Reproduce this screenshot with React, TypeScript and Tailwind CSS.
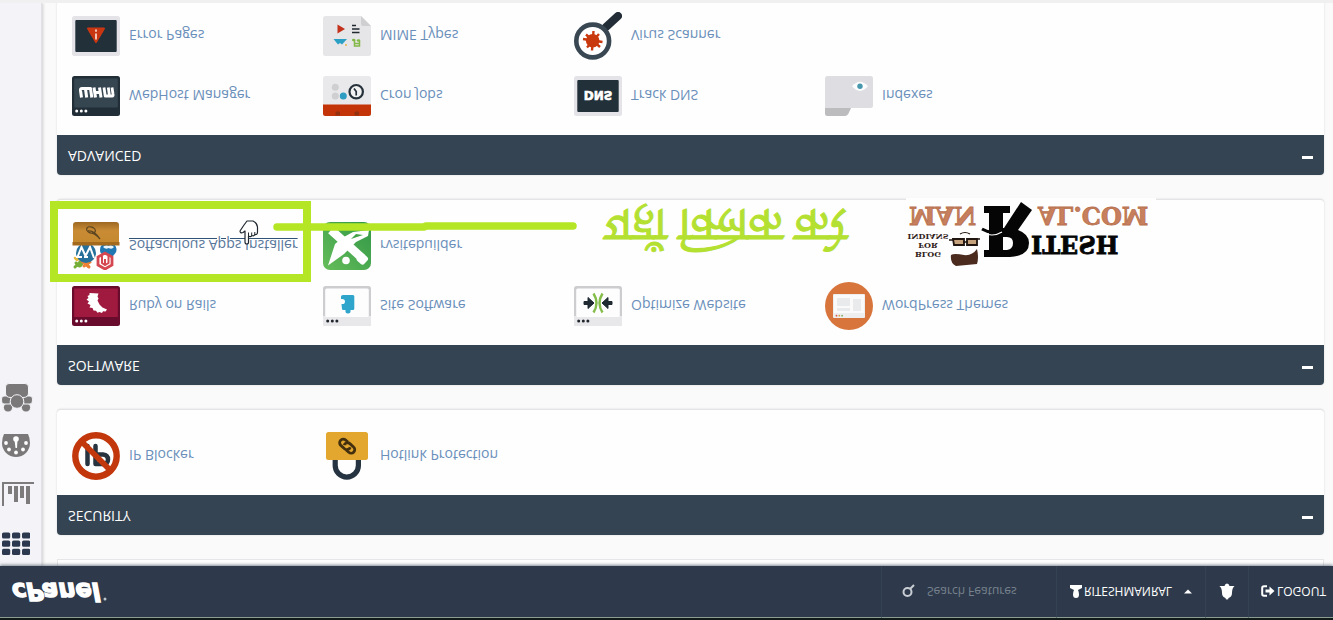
import React from "react";

type Item = { name: string; icon: React.ReactNode; active?: boolean };

function Icon({ children }: { children: React.ReactNode }) {
  return (
    <svg viewBox="0 0 48 48" className="size-12 shrink-0" aria-hidden="true">
      {children}
    </svg>
  );
}

const Dots = ({ fill }: { fill: string }) => (
  <g fill={fill}>
    <circle cx="4.7" cy="9" r="1.5" />
    <circle cx="9.3" cy="9" r="1.5" />
    <circle cx="13.9" cy="9" r="1.5" />
  </g>
);

const LightWindow = ({ children }: { children: React.ReactNode }) => (
  <Icon>
    <rect y="4" width="48" height="40" rx="2.5" fill="#cdcdd0" />
    <path d="M0 14V6.500Q0 4 2.500 4H45.500Q48 4 48 6.500V14Z" fill="#e8e8eb" />
    <rect x="2.200" y="13" width="43.600" height="28.500" rx="1.500" fill="#fdfdfe" />
    <Dots fill="#20262c" />
    {children}
  </Icon>
);

const DarkFrame = ({ children }: { children: React.ReactNode }) => (
  <Icon>
    <rect y="4" width="48" height="40" rx="2.5" fill="#e3e3e8" />
    <rect x="3.300" y="8" width="41.400" height="32" rx="1" fill="#22303a" />
    {children}
  </Icon>
);

const IpBlocker = (
  <Icon>
    <g fill="none" stroke="#27333f" strokeWidth="4.500" strokeLinecap="round" strokeLinejoin="round">
      <path d="M15.500 16V34" />
      <path d="M23.500 34V16H31Q36 16 36 20.500T31 25.500H24" />
    </g>
    <circle cx="24" cy="24" r="20.700" fill="none" stroke="#c2370b" strokeWidth="6.400" />
    <path d="M9.500 38.500L38.500 9.500" stroke="#c2370b" strokeWidth="5.600" />
  </Icon>
);

const Hotlink = (
  <Icon>
    <path d="M12.200 22V14.500a11.600 11.600 0 0 1 23.200 0V22" fill="none" stroke="#253440" strokeWidth="5.200" />
    <rect x="3" y="20" width="42" height="28" rx="2.500" fill="#e3a72f" />
    <g fill="none" stroke="#43300f" strokeWidth="2.800" transform="rotate(-42 24 34)">
      <path d="M22 37.500H19a3.600 3.600 0 0 1 0-7.200h5a3.600 3.600 0 0 1 3.200 5" />
      <path d="M26 30.500H29.500a3.600 3.600 0 0 1 0 7.200h-5a3.600 3.600 0 0 1-3.200-5" />
    </g>
  </Icon>
);

const Ruby = (
  <Icon>
    <rect y="4" width="48" height="40" rx="2.500" fill="#690b2d" />
    <rect x="2.200" y="13" width="43.600" height="28.500" fill="#a01a40" />
    <Dots fill="#ffffff" />
    <path d="M35 20.500L33.500 18.500 31 18.800 30 17 27.500 18 25.500 17.200 24 19.200 21.500 19.500 20.500 22 17.500 22.500 18.500 25 15.500 26.500 17 28.500 14.500 30.500 16.500 32 15.500 34 17.500 35 17.500 37 26.500 36.500 25.500 33.500 26.500 31.500 25.500 29.500 27.500 25.500 30.500 22.500Z" fill="#ffffff" />
  </Icon>
);

const SiteSoftware = (
  <LightWindow>
    <path d="M19 21Q19 20 20.500 20H22.500Q22 16.500 25 16.500T27.500 20H30Q31.300 20 31.300 21.500V33.500Q31.300 35 30 35H20Q18 35 18 33.500V31Q22 31.500 22 28.500T18.500 26Z" fill="#2fa5cc" />
  </LightWindow>
);

const Optimize = (
  <LightWindow>
    <g fill="#1f2a33">
      <path d="M10 25.500H14V21.500L20 27 14 32.500V28.500H10Z" stroke="#1f2a33" strokeLinejoin="round" />
      <path d="M38 25.500H34V21.500L28 27 34 32.500V28.500H38Z" stroke="#1f2a33" strokeLinejoin="round" />
    </g>
    <g fill="none" stroke="#84bd4a" strokeWidth="2.400">
      <path d="M19.500 17.500Q25.500 27 19.500 36.500" />
      <path d="M28.500 17.500Q22.500 27 28.500 36.500" />
    </g>
  </LightWindow>
);

const WordPressThemes = (
  <Icon>
    <circle cx="24" cy="24" r="24" fill="#d8753c" />
    <rect x="8" y="12" width="32" height="24" rx="1" fill="#eeeeef" />
    <rect x="9" y="17" width="30" height="18" fill="#fafafb" />
    <path d="M12 19h13v3H12zM12 24h13v8H12zM28 19h8v12h-8z" fill="#e9eaec" />
    <circle cx="11.500" cy="14.300" r=".9" fill="#d45145" />
    <circle cx="14.300" cy="14.300" r=".9" fill="#d8a244" />
    <circle cx="17.100" cy="14.300" r=".9" fill="#7eae62" />
  </Icon>
);

const Softaculous = (
  <Icon>
    <defs>
      <linearGradient id="box" x1="0" y1="0" x2="0" y2="1">
        <stop offset="0" stopColor="#c4882e" />
        <stop offset=".6" stopColor="#c98c35" />
        <stop offset="1" stopColor="#9d6822" />
      </linearGradient>
    </defs>
    <g fill="none" strokeLinecap="round">
      <path d="M4 7Q8 1 10 7T16 4M3 3L10 10" stroke="#75ad39" strokeWidth="3" />
      <path d="M10 9L17 3M12 4L18 8" stroke="#ed8136" strokeWidth="3" />
      <path d="M3 12L5 10L9 12" stroke="#e7b93c" strokeWidth="2.500" />
    </g>
    <circle cx="14" cy="17" r="10" fill="#26719c" />
    <path d="M5.500 13L9.500 23L13.500 14L18 23L22 12M4 13H10M12 13H16" fill="none" stroke="#ffffff" strokeWidth="2" />
    <path d="M37 9C37 14 45 14 44.500 21Q44 27 36 27T28 20C28 14 34 16 37 9Z" fill="#2078b2" />
    <path d="M31 23Q34 20 36.500 22Q40 20 42 23Q39 26 36.500 24Q34 26 31 23Z" fill="#eaf5fb" />
    <path d="M26 5L33 1 40 5V13L33 17 26 13Z" fill="#ffffff" stroke="#d54851" strokeWidth="2.800" />
    <path d="M30 14V7L33 5 36.500 7V14M33 5V11" fill="none" stroke="#d54851" strokeWidth="2" />
    <path d="M1 26H47V45Q47 48 44 48H4Q1 48 1 45Z" fill="url(#box)" />
    <path d="M.5 24.500H47.500V28H.5Z" fill="#a3691d" />
    <g fill="none" stroke="#5d4620" strokeWidth="1.300">
      <ellipse cx="19" cy="40" rx="4.500" ry="3" transform="rotate(-20 19 40)" />
      <path d="M16 39Q22 40 28 31M20 37Q24 36 28 31" />
    </g>
  </Icon>
);

const RvSite = (
  <Icon>
    <defs>
      <linearGradient id="leaf" x1="0" y1="0" x2="1" y2="1">
        <stop offset="0" stopColor="#66bd5a" />
        <stop offset="1" stopColor="#319747" />
      </linearGradient>
    </defs>
    <rect width="48" height="48" rx="7" fill="url(#leaf)" />
    <path d="M5 4.500L12 26 19 32 30 38 46 40 45 34 33 28 21 16Z" fill="#ffffff" />
    <path d="M28 31L40 35 33 36Z" fill="#43a34a" />
    <path d="M8 40L39 12" stroke="#ffffff" strokeWidth="8.500" />
    <rect x="34.500" y="6.500" width="9.500" height="9.500" rx="2.500" transform="rotate(-42 39 11)" fill="#ffffff" />
    <circle cx="23" cy="9.500" r="3.800" fill="#ffffff" />
  </Icon>
);

const Whm = (
  <Icon>
    <rect y="4" width="48" height="40" rx="2.500" fill="#212e38" />
    <rect x="2.200" y="12.500" width="43.600" height="29" rx="1" fill="#364651" />
    <Dots fill="#ffffff" />
    <g fill="none" stroke="#ffffff" strokeWidth="3" strokeLinejoin="round">
      <path d="M9.500 22.500L8.500 29.500Q8.300 31.500 10 31.500H18.500L19.800 22.500M14.700 22.500L13.500 31" />
      <path d="M23.500 22.500L22 32.500M29 22.500L27.500 32.500M23 27.500H28.500" />
      <path d="M32 32.500L33.200 24H40Q41.500 24 41 26L40 32.500M37.500 24L36.300 32.500" strokeWidth="2.800" />
    </g>
  </Icon>
);

const Cron = (
  <Icon>
    <rect y="4" width="48" height="40" rx="2.500" fill="#e9e9eb" />
    <path d="M0 15.500V6.500Q0 4 2.500 4H45.500Q48 4 48 6.500V15.500Z" fill="#c33409" />
    <path d="M12.500 4.500h4.500V7.500Q14.700 10 12.500 7.500ZM31.500 4.500h4.500V7.500Q33.700 10 31.500 7.500Z" fill="#93300f" />
    <circle cx="12.300" cy="32.700" r="3.500" fill="#cfcfd1" />
    <circle cx="12.300" cy="24" r="3.500" fill="#cfcfd1" />
    <circle cx="20.300" cy="24" r="3.500" fill="#2d9dc2" />
    <circle cx="33.200" cy="28.300" r="6.700" fill="#f2f2f3" stroke="#27313a" strokeWidth="2.200" />
    <path d="M33.200 24.500V28.500L31 31.500" fill="none" stroke="#27313a" strokeWidth="1.700" />
  </Icon>
);

const TrackDns = (
  <DarkFrame>
    <text x="24" y="29" textAnchor="middle" fontFamily="DejaVu Sans" fontWeight="700" fontSize="12" fill="#ffffff" stroke="#ffffff" strokeWidth=".6">DNS</text>
  </DarkFrame>
);

const Indexes = (
  <Icon>
    <path d="M0 14V6.500Q0 4 2.500 4H20Q22 4 23.200 6L27 14Z" fill="#bcbcbe" />
    <path d="M0 12H45.500Q48 12 48 14.500V41.500Q48 44 45.500 44H2.500Q0 44 0 41.500Z" fill="#dedde1" />
    <path d="M27 33.700Q35 24.500 43 33.700Q35 43 27 33.700Z" fill="#fafcfd" />
    <circle cx="35" cy="33.700" r="2.700" fill="#4797ad" />
  </Icon>
);

const ErrorPages = (
  <DarkFrame>
    <path d="M24 18L32 31.500H16Z" fill="#c93612" stroke="#c93612" strokeWidth="2" strokeLinejoin="round" />
    <path d="M24 20.500V26.500M24 28.300V30.500" stroke="#f2c3b6" strokeWidth="2" />
  </DarkFrame>
);

const Mime = (
  <Icon>
    <path d="M2.500 4H45.500Q48 4 48 6.500V34L38 44H2.500Q0 44 0 41.500V6.500Q0 4 2.500 4Z" fill="#e6e6e8" />
    <path d="M38 44V36Q38 34 40 34H48Z" fill="#cfcfd2" />
    <path d="M14.500 26.500L22 31 14.500 35.500Z" fill="#c4311a" />
    <path d="M29 27.500H36.500M29 31H36.500M29 34.500H33" stroke="#22292f" strokeWidth="1.700" />
    <path d="M10.500 21L15 15.500 17 17 19 15.500 24 21Z" fill="#2b9fc4" />
    <circle cx="23" cy="15" r="1" fill="#e5b34a" />
    <path d="M31.500 20V14H36.500V19M31.500 16.500H36" fill="none" stroke="#83b846" strokeWidth="1.500" />
    <ellipse cx="30.700" cy="20" rx="1.800" ry="1.300" fill="#83b846" />
    <ellipse cx="35.500" cy="19.500" rx="1.800" ry="1.300" fill="#83b846" />
  </Icon>
);

const Virus = (
  <Icon>
    <path d="M32 33L44 44" stroke="#222d37" strokeWidth="8" strokeLinecap="round" />
    <circle cx="18.700" cy="19" r="16.400" fill="#ffffff" stroke="#384752" strokeWidth="4.600" />
    <g stroke="#c9390e" strokeWidth="2.400">
      <path d="M18 9.500L19.500 29M9 21L28.500 18M13 12.500L25 26M12 25.500L26 13" />
    </g>
    <circle cx="18.700" cy="19.300" r="6.800" fill="#c9390e" />
  </Icon>
);

const panels: { title: string; items: Item[] }[] = [
  { title: "SECURITY", items: [{ name: "IP Blocker", icon: IpBlocker }, { name: "Hotlink Protection", icon: Hotlink }] },
  {
    title: "SOFTWARE",
    items: [
      { name: "Ruby on Rails", icon: Ruby },
      { name: "Site Software", icon: SiteSoftware },
      { name: "Optimize Website", icon: Optimize },
      { name: "WordPress Themes", icon: WordPressThemes },
      { name: "Softaculous Apps Installer", icon: Softaculous, active: true },
      { name: "rvsitebuilder", icon: RvSite },
    ],
  },
  {
    title: "ADVANCED",
    items: [
      { name: "WebHost Manager", icon: Whm },
      { name: "Cron Jobs", icon: Cron },
      { name: "Track DNS", icon: TrackDns },
      { name: "Indexes", icon: Indexes },
      { name: "Error Pages", icon: ErrorPages },
      { name: "MIME Types", icon: Mime },
      { name: "Virus Scanner", icon: Virus },
    ],
  },
];

function Panel({ title, items }: { title: string; items: Item[] }) {
  return (
    <section className="mb-6 shrink-0 rounded border-b border-[#e4e4e6] bg-[#fefefe] shadow-[0_0_2px_rgba(0,0,0,0.15)]">
      <header className="flex h-10 items-center justify-between rounded-t bg-[#354453] px-[11px] text-white">
        <h2 className="pb-0.5 text-[14px] leading-5">{title}</h2>
        <button type="button" aria-label={`Collapse ${title}`} className="flex h-6 items-center pb-1.5">
          <span className="h-[3px] w-[11px] bg-white" />
        </button>
      </header>
      <ul className="grid grid-cols-5 px-1.5 pt-[9px] pb-4 [&>li:nth-child(4n+1)]:col-start-1">
        {items.map((item) => (
          <li key={item.name} className="h-[60px]">
            <a
              href="#"
              className={
                item.active
                  ? "flex h-full items-center gap-[9px] pl-[9px] text-[14px] whitespace-nowrap text-[#58779a] underline decoration-[#2f5478] underline-offset-1"
                  : "flex h-full items-center gap-[9px] pl-[9px] text-[14px] whitespace-nowrap text-[#6a8fba]"
              }
            >
              {item.icon}
              <span>{item.name}</span>
            </a>
          </li>
        ))}
      </ul>
    </section>
  );
}

function Header() {
  return (
    <header className="relative z-10 flex h-[54px] shrink-0 items-stretch border-t-2 border-[#101a18] bg-[#2e3a4b] text-[12px] text-white shadow-[0_1px_3px_rgba(40,55,70,0.6)]">
      <a href="#" aria-label="cPanel" className="flex items-center border-t border-[#8b9d91] pl-[11px]">
        <svg width="100" height="36" viewBox="0 0 100 36">
          <text x="1" y="26" fontFamily="DejaVu Sans" fontWeight="700" fontStyle="italic" fontSize="24" fill="#fff" stroke="#fff" strokeWidth="1.400">cPanel</text>
          <circle cx="94" cy="10" r="1.500" fill="#bcc4cc" />
        </svg>
      </a>
      <div className="flex-1 border-t border-[#8b9d91]" />
      <label className="flex w-[175px] items-center gap-3 border-t border-l border-t-[#8b9d91] border-l-[#354253] pl-5">
        <svg width="13" height="14" viewBox="0 0 13 14" fill="none" stroke="#c9ced4" strokeWidth="2" aria-hidden="true">
          <circle cx="5.500" cy="6" r="4" />
          <path d="M8 9L12 13" />
        </svg>
        <input type="search" placeholder="Search Features" aria-label="Search Features" className="w-28 bg-transparent outline-none placeholder:text-[#77818d]" />
      </label>
      <button type="button" className="flex w-[149px] items-center border-t border-l border-t-[#8b9d91] border-l-[#354253] pl-[13px]">
        <svg width="12" height="13" viewBox="0 0 12 13" fill="#fff" aria-hidden="true">
          <path d="M3 3.500Q3 0 6 0T9 3.500Q9 6 8 8L12 10V13H0V10L4 8Q3 6 3 3.500Z" />
        </svg>
        <span className="ml-0.5">RITESHMANRAL</span>
        <svg width="8" height="5" viewBox="0 0 8 5" className="ml-3" fill="#fff" aria-hidden="true">
          <path d="M0 .5H8L4 4.500Z" />
        </svg>
      </button>
      <button type="button" aria-label="Notifications" className="flex w-[43px] items-center justify-center border-t border-l border-t-[#8b9d91] border-l-[#354253]">
        <svg width="16" height="17" viewBox="0 0 16 17" fill="#fff" aria-hidden="true">
          <path d="M6.500 2Q6.500 .5 8 .5T9.500 2Q13 3 13 7Q13 12 15.500 14H10.500Q10 16.500 8 16.500T5.500 14H.5Q3 12 3 7Q3 3 6.500 2Z" />
        </svg>
      </button>
      <a href="#" className="flex w-[85px] items-center gap-0.5 border-t border-l border-t-[#8b9d91] border-l-[#354253] pl-3">
        <svg width="14" height="12" viewBox="0 0 14 12" aria-hidden="true">
          <path d="M6 1.200H3Q1.200 1.200 1.200 3V9Q1.200 10.800 3 10.800H6" fill="none" stroke="#fff" strokeWidth="2" />
          <path d="M4.500 4.500H8.500V1.500L13.500 6 8.500 10.500V7.500H4.500Z" fill="#fff" />
        </svg>
        <span>LOGOUT</span>
      </a>
    </header>
  );
}

function Sidebar() {
  return (
    <nav className="flex w-[42px] shrink-0 flex-col gap-4 border-r border-[#e2e2e6] bg-[#f4f4f8] pt-1.5 shadow-[1px_0_3px_rgba(0,0,0,0.18)]">
      <a href="#" aria-label="Home" className="flex h-[33px] items-center pl-0.5">
        <svg width="28" height="23" viewBox="0 0 28 23" fill="#2b384e">
          {[0, 8.2, 16.400].map((y) => [0, 10, 20].map((x) => <rect key={`${x}-${y}`} x={x} y={y} width="8.200" height="6.200" rx="1.600" />))}
        </svg>
      </a>
      <a href="#" aria-label="Statistics" className="flex h-[33px] items-center pl-0.5">
        <svg width="32" height="24" viewBox="0 0 32 24" fill="#7d7b7c">
          <path d="M0 0H2V22H32V24H0ZM6 12H10V20H6ZM12 4H16V20H12ZM18 8H22V20H18ZM24 2H28V20H24Z" />
        </svg>
      </a>
      <a href="#" aria-label="Dashboard" className="flex h-[33px] items-center pl-0.5">
        <svg width="28" height="23" viewBox="0 0 28 23">
          <path d="M14 0A14 14 0 0 1 28 14Q28 19 26 23H2Q0 19 0 14A14 14 0 0 1 14 0Z" fill="#7a7879" />
          <g fill="#fff">
            <circle cx="4" cy="14" r="1.900" />
            <circle cx="7" cy="7.500" r="1.900" />
            <circle cx="14" cy="4.500" r="1.900" />
            <circle cx="21" cy="7.500" r="1.900" />
            <circle cx="24" cy="14" r="1.900" />
            <circle cx="14" cy="18" r="2.800" />
            <path d="M12.500 17L13.500 9H15L15.500 17Z" />
          </g>
        </svg>
      </a>
      <a href="#" aria-label="User Manager" className="flex h-[29px] items-center">
        <svg width="34" height="30" viewBox="0 0 34 30" fill="#7a7879" stroke="#f4f4f8" strokeWidth="1">
          <circle cx="8" cy="5.500" r="4.600" />
          <circle cx="26" cy="5.500" r="4.600" />
          <path d="M4 9H10L12 17H4Q1.500 17 1.500 14Q1.500 9 4 9ZM30 9H24L22 17H30Q32.500 17 32.500 14Q32.500 9 30 9Z" />
          <path d="M5.500 26V20Q5.500 15.500 11 15.500H23Q28.500 15.500 28.500 20V26Q28.500 29.500 25 29.500H9Q5.500 29.500 5.500 26Z" />
          <circle cx="17" cy="11.500" r="6.800" />
        </svg>
      </a>
    </nav>
  );
}

function BrandMark() {
  return (
    <svg width="250" height="72" viewBox="0 0 250 72" role="img" aria-label="RiteshManral.com" className="absolute top-[350px] left-[906px] bg-[#fefefe]">
      <g fontFamily="DejaVu Serif" fontWeight="700">
        <g fontSize="8" fill="#2f2119" textAnchor="middle">
          <text x="22" y="18">BLOG</text>
          <text x="22" y="27">FOR</text>
          <text x="22" y="36">INDIANS</text>
        </g>
        <g fontSize="24">
          <text x="3" y="63" fill="#c77f5d" stroke="#b8714f" strokeWidth=".8">MAN</text>
          <text x="132" y="63" fill="#c77f5d" stroke="#b8714f" strokeWidth=".8">AL.COM</text>
          <text x="125" y="34" fill="#050505" stroke="#050505" strokeWidth=".8">ITESH</text>
        </g>
      </g>
      <path d="M78 13H104Q123 14 123 27Q123 36 112 40L126 60 115 68 98 42H97V57H104V64H78V57H83V20H78Z" fill="#050505" />
      <path d="M97 20H101Q107 21 107 27T101 33H97Z" fill="#fefefe" />
      <path d="M76 38Q86 32 96 38" fill="none" stroke="#ffffff" strokeWidth="1.200" />
      <path d="M76 41Q86 35 96 41" fill="none" stroke="#050505" strokeWidth="3" />
      <g>
        <path d="M45 15Q44 7 50 4L71 6Q73 12 71 21Q66 14 58 15Q48 17 45 15Z" fill="#4a2b1e" />
        <path d="M47 31H58V25H48ZM61 25H71V31H61Z" fill="#c7a37d" stroke="#20150f" strokeWidth="1.800" />
        <path d="M57 28H62M43 30H48M70 31H74" stroke="#20150f" strokeWidth="1.500" />
        <path d="M54 36Q59 39 64 36" fill="none" stroke="#20150f" strokeWidth="1.200" />
      </g>
    </svg>
  );
}

function Annotations() {
  return (
    <div className="pointer-events-none absolute inset-0 z-20">
      <div className="absolute top-[338px] left-[50px] h-[81px] w-[261px] border-8 border-[#b4e625]" />
      <svg width="306" height="10" viewBox="0 0 306 10" className="absolute top-[388px] left-[272px]" aria-hidden="true">
        <path d="M5 5H152" stroke="#b4e625" strokeWidth="7.500" strokeLinecap="round" />
        <path d="M154 6H301" stroke="#b4e625" strokeWidth="7.500" strokeLinecap="round" />
      </svg>
      <p lang="hi" className="absolute top-[374px] left-[605px] font-['Noto_Serif_Devanagari','Noto_Sans_Devanagari','Noto_Sans',serif] text-[48px] leading-[60px] whitespace-nowrap text-[#b4e032] [-webkit-text-stroke:1px_#b4e032]">यहाँ क्लिक करे</p>
      <BrandMark />
      <svg width="20" height="25" viewBox="0 0 20 25" className="absolute top-[375px] left-[239px]" aria-hidden="true">
        <path d="M6 14V3Q6 1 7.800 1T9.500 3V9Q12 7.500 12.800 9.500Q15 8.500 15.800 10.500Q18.500 10 18.500 13V18Q18 22 14 24H8L5 20 1 14Q1 11.500 4 12.500Z" fill="#fff" stroke="#1e2730" strokeWidth="1.200" strokeLinejoin="round" />
        <path d="M9.500 9V12.500M12.700 9.500V12.500M15.800 10.500V13" stroke="#1e2730" />
      </svg>
    </div>
  );
}

export default function App() {
  return (
    <div className="relative flex h-screen -scale-y-100 flex-col overflow-hidden bg-[#fafafa] font-['Open_Sans',sans-serif]">
      <Header />
      <div className="flex min-h-0 flex-1 overflow-hidden">
        <Sidebar />
        <main className="flex min-w-0 flex-1 flex-col overflow-hidden pr-[9px] pl-[15px]">
          <div className="mb-6 h-[7px] shrink-0 border-x border-b border-[#e6e6e8] bg-[#fefefe]" />
          {panels.map((panel) => (
            <Panel key={panel.title} title={panel.title} items={panel.items} />
          ))}
        </main>
      </div>
      <div className="h-[3px] shrink-0 bg-[#f0f0f0]" />
      <Annotations />
    </div>
  );
}
